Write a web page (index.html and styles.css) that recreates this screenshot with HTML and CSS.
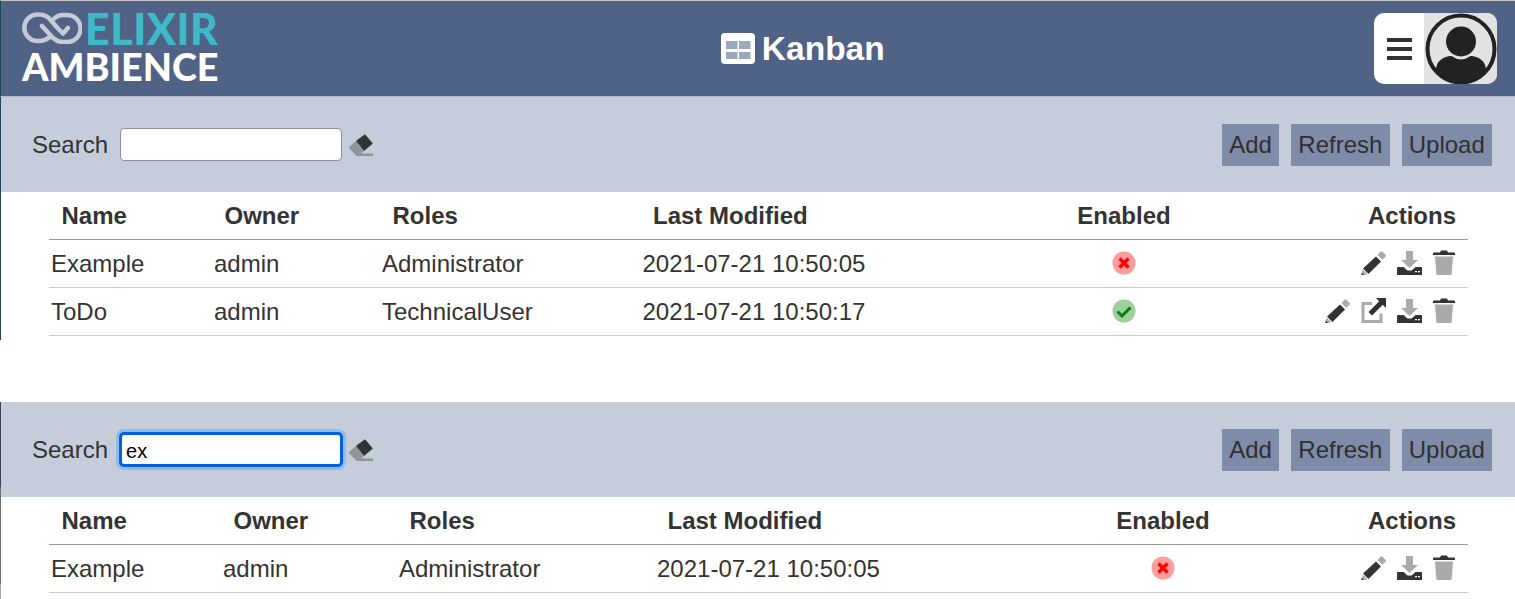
FILE: index.html
```html
<!DOCTYPE html>
<html lang="en">
<head>
    <meta charset="UTF-8">
    <title>Elixir Ambience - Kanban</title>
    <link rel="stylesheet" href="styles.css">
</head>
<body>
    <svg class="sprites" width="0" height="0">
        <symbol id="i-pencil" viewBox="0 0 25 25">
            <path fill="#333" d="M15 6.500l5 5L7.500 24 2 18.500z"/>
            <path fill="#aaa" d="M16.500 5l3-3.200a1.500 1.500 0 0 1 2 0l3 3a1.500 1.500 0 0 1 0 2l-3.200 3zM1.700 19.500l4.800 4.800-4 .7-2-.5z"/>
            <path fill="#333" d="M.5 22.500L3 25H.5z"/>
        </symbol>
        <symbol id="i-download" viewBox="0 0 25 25">
            <path fill="#aaa" d="M9 1h7v9h5l-8.500 8L4 10h5z"/>
            <path fill="#333" d="M0 18c0-.5.500-1 1-1h5.500l4 3.500h4l4-3.500H24c.5 0 1 .5 1 1v7H0zM18 21v1.300h2V21zm3 0v1.300h2V21z" fill-rule="evenodd"/>
        </symbol>
        <symbol id="i-trash" viewBox="0 0 22 25">
            <path fill="#aaa" d="M2 6.500h18l-1.300 17a1.500 1.500 0 0 1-1.500 1.500H4.800a1.500 1.500 0 0 1-1.500-1.500z"/>
            <path fill="#333" d="M7 2.500L8 .5h6l1 2h6a1 1 0 0 1 1 1V5H0V3.500a1 1 0 0 1 1-1z"/>
        </symbol>
        <symbol id="i-link" viewBox="0 0 25 25">
            <path fill="none" stroke="#aaa" stroke-width="3" d="M11 5.500H2v18h18v-8"/>
            <path fill="#333" d="M15 0h10v10l-3.200-3.200L11 17.500 7.500 14 18.200 3.300z"/>
        </symbol>
        <symbol id="i-eraser" viewBox="0 0 25 22">
            <path fill="#333" stroke="#333" stroke-linejoin="round" d="M17 .8L24.300 9.500 16 16.500 8.500 7z"/>
            <path fill="#8f939c" d="M8 7l8 10-3 2.500H25V22H8.500L.5 13.500z"/>
        </symbol>
        <symbol id="i-no" viewBox="0 0 24 24">
            <circle cx="12" cy="12" r="11.500" fill="#ff9c9c"/>
            <path fill="#f00" d="M8.700 6.300l3.300 3.300 3.300-3.300 2.400 2.400-3.300 3.300 3.300 3.300-2.400 2.400-3.300-3.300-3.300 3.300-2.400-2.400 3.300-3.300-3.300-3.300z"/>
        </symbol>
        <symbol id="i-yes" viewBox="0 0 24 24">
            <circle cx="12" cy="12" r="11.500" fill="#9dd09d"/>
            <path fill="none" stroke="#008000" stroke-width="3" d="M5.500 12.500l4.500 4.500 8.500-8.500"/>
        </symbol>
    </svg>

    <header class="topbar">
        <div class="logo">
            <div class="logo-top">
                <svg class="logo-mark" viewBox="0 0 60 32" width="60" height="32">
                    <g fill="none" stroke="#c5cad6" stroke-width="4.500" stroke-linecap="round" stroke-linejoin="round">
                        <path d="M46 16l-5 5.500-5.500-5.500L29 8.500C26 4.500 22 2.500 17 2.500H14.500a13.300 13.300 0 0 0 0 26.500H17c4 0 7-1 10-3.500"/>
                        <path d="M20 14l11 12c3 2.500 6 4 10 4h4a13.500 13.500 0 0 0 0-27h-4c-4 0-7 1.500-10 4.500"/>
                    </g>
                </svg>
                <span class="logo-elixir">ELIXIR</span>
            </div>
            <div class="logo-ambience">AMBIENCE</div>
        </div>
        <div class="page-title">
            <svg class="title-icon" viewBox="0 0 34 31" width="34" height="31">
                <rect width="34" height="31" rx="4" fill="#fff"/>
                <path fill="#9ba8bf" d="M5 8h11.500v8H5zM18 8h11.500v8H18zM5 19h11.500v7H5zM18 19h11.500v7H18z"/>
            </svg>
            <span>Kanban</span>
        </div>
        <div class="user-box">
            <div class="menu-btn"><i></i><i></i><i></i></div>
            <div class="avatar">
                <svg viewBox="0 0 72 72" width="72" height="72">
                    <circle cx="36" cy="36" r="33.500" fill="none" stroke="#222" stroke-width="4"/>
                    <circle cx="36" cy="28.500" r="15" fill="#222"/>
                    <path fill="#222" d="M11 58c0-8 4-12 10-14 4-1.500 6-1 8 .5 4 2.500 10 2.500 14 0 2-1.500 4-2 8-.5 6 2 10 6 10 14a33 33 0 0 1-50 0z"/>
                </svg>
            </div>
        </div>
    </header>

    <section class="panel panel-first">
        <div class="toolbar">
            <div class="search">
                <label for="q1">Search</label>
                <input id="q1" type="text">
                <svg class="eraser" width="25" height="22"><use href="#i-eraser"/></svg>
            </div>
            <div class="buttons">
                <button>Add</button>
                <button>Refresh</button>
                <button>Upload</button>
            </div>
        </div>
        <div class="table-wrap">
            <table class="grid grid-a">
                <thead>
                    <tr><th class="c-name">Name</th><th class="c-owner">Owner</th><th class="c-roles">Roles</th><th class="c-mod">Last Modified</th><th class="c-on">Enabled</th><th class="c-act">Actions</th></tr>
                </thead>
                <tbody>
                    <tr>
                        <td>Example</td><td>admin</td><td>Administrator</td><td>2021-07-21 10:50:05</td>
                        <td class="c-on"><svg class="state" width="24" height="24"><use href="#i-no"/></svg></td>
                        <td class="c-act"><div class="acts">
                            <svg width="25" height="25"><use href="#i-pencil"/></svg>
                            <svg width="25" height="25"><use href="#i-download"/></svg>
                            <svg width="22" height="25"><use href="#i-trash"/></svg>
                        </div></td>
                    </tr>
                    <tr>
                        <td>ToDo</td><td>admin</td><td>TechnicalUser</td><td>2021-07-21 10:50:17</td>
                        <td class="c-on"><svg class="state" width="24" height="24"><use href="#i-yes"/></svg></td>
                        <td class="c-act"><div class="acts">
                            <svg width="25" height="25"><use href="#i-pencil"/></svg>
                            <svg width="25" height="25"><use href="#i-link"/></svg>
                            <svg width="25" height="25"><use href="#i-download"/></svg>
                            <svg width="22" height="25"><use href="#i-trash"/></svg>
                        </div></td>
                    </tr>
                </tbody>
            </table>
        </div>
    </section>

    <section class="panel panel-second">
        <div class="toolbar">
            <div class="search">
                <label for="q2">Search</label>
                <input id="q2" class="focused" type="text" value="ex">
                <svg class="eraser" width="25" height="22"><use href="#i-eraser"/></svg>
            </div>
            <div class="buttons">
                <button>Add</button>
                <button>Refresh</button>
                <button>Upload</button>
            </div>
        </div>
        <div class="table-wrap">
            <table class="grid grid-b">
                <thead>
                    <tr><th class="c-name">Name</th><th class="c-owner">Owner</th><th class="c-roles">Roles</th><th class="c-mod">Last Modified</th><th class="c-on">Enabled</th><th class="c-act">Actions</th></tr>
                </thead>
                <tbody>
                    <tr>
                        <td>Example</td><td>admin</td><td>Administrator</td><td>2021-07-21 10:50:05</td>
                        <td class="c-on"><svg class="state" width="24" height="24"><use href="#i-no"/></svg></td>
                        <td class="c-act"><div class="acts">
                            <svg width="25" height="25"><use href="#i-pencil"/></svg>
                            <svg width="25" height="25"><use href="#i-download"/></svg>
                            <svg width="22" height="25"><use href="#i-trash"/></svg>
                        </div></td>
                    </tr>
                </tbody>
            </table>
        </div>
    </section>
</body>
</html>
```

FILE: styles.css
```css
* {
    box-sizing: border-box;
}

html, body {
    height: 599px;
    overflow: hidden;
}

body {
    margin: 0;
    background: #fff;
    color: #333;
    font-family: "Liberation Sans", Arial, sans-serif;
    font-size: 24px;
}

.sprites {
    position: absolute;
}

.topbar {
    height: 97px;
    display: flex;
    justify-content: space-between;
    align-items: center;
    padding: 0 18px 0 20px;
    background: #506285;
    border-top: 1px solid #c8c8c8;
    border-left: 1px solid #1c4a55;
    border-bottom: 1px solid #b4bac6;
}

.logo {
    color: #fff;
    font-family: Lato, "Liberation Sans", sans-serif;
    font-weight: 900;
    line-height: 1;
}

.logo-top {
    display: flex;
    align-items: center;
    height: 33px;
    margin-top: -3px;
}

.logo-mark {
    flex: none;
    margin: 0 3px 0 1px;
}

.logo-elixir {
    color: #3db9c9;
    font-size: 43px;
    line-height: 33px;
    letter-spacing: .5px;
    margin-top: 2px;
}

.logo-ambience {
    font-size: 37.800px;
    line-height: 33px;
    margin: 6px 0 0 1px;
}

.page-title {
    display: flex;
    align-items: center;
    gap: 7px;
    margin-left: 13px;
    color: #fff;
    font-size: 33.500px;
    font-weight: bold;
}

.user-box {
    display: flex;
    width: 123px;
    height: 71px;
    border-radius: 10px;
    overflow: hidden;
    background: #fff;
}

.menu-btn {
    width: 50px;
    display: flex;
    flex-direction: column;
    justify-content: center;
    align-items: center;
    gap: 5px;
}

.menu-btn i {
    width: 25px;
    height: 4px;
    background: #333;
}

.avatar {
    flex: 1;
    background: #e2e2e2;
    display: flex;
    align-items: center;
    justify-content: center;
}

.panel-first {
    height: 243px;
    border-left: 1px solid #1c4a55;
}

.panel-second {
    height: 197px;
    margin-top: 62px;
    border-left: 1px solid;
    border-image: linear-gradient(#3a4256 0, #3a4256 85px, #6e7074 85px, #6e7074 181px, #a6a6a6 181px) 1;
}

.toolbar {
    height: 95px;
    display: flex;
    justify-content: space-between;
    align-items: center;
    padding: 0 23px 0 31px;
    background: #c5cddb;
}

.search {
    display: flex;
    align-items: center;
}

.search input {
    width: 222px;
    height: 33px;
    margin: 0 6px 0 12px;
    padding: 1px 5px;
    border: 1px solid #8f8f9d;
    border-radius: 4px;
    background: #fff;
    color: #000;
    font: 20px "Liberation Sans", Arial, sans-serif;
    outline: none;
}

.search input.focused {
    padding: 5px 4px 1px;
    border: 2px solid #0060df;
    box-shadow: 0 0 0 1px #0060df, 0 0 0 4px #8fbce8;
}

.buttons {
    display: flex;
    gap: 12px;
}

.buttons button {
    height: 42px;
    padding: 0 7.200px;
    border: 0;
    background: #7f8ca9;
    color: #2f2f2f;
    font: 24px "Liberation Sans", Arial, sans-serif;
}

.table-wrap {
    padding: 0 47px 0 48px;
}

.grid {
    width: 100%;
    table-layout: fixed;
    border-collapse: collapse;
}

.grid th {
    height: 47px;
    padding: 2px 0 0 12.500px;
    text-align: left;
    border-bottom: 1px solid #999;
    white-space: nowrap;
}

.grid td {
    height: 48px;
    padding: 2px 0 0 2px;
    border-bottom: 1px solid #ccc;
    white-space: nowrap;
}

.grid .c-on {
    text-align: center;
    padding: 0;
}

.grid th.c-on {
    padding-top: 2px;
}

.grid .c-act {
    text-align: right;
    padding: 2px 12px 0 0;
}

.grid td.c-act {
    padding: 0 13px 1px 0;
}

.grid-a .c-name { width: 163px; }
.grid-a .c-owner { width: 168px; }
.grid-a .c-roles { width: 260.500px; }
.grid-a .c-mod { width: 373.500px; }
.grid-a .c-on { width: 220px; }

.grid-b .c-name { width: 172px; }
.grid-b .c-owner { width: 176px; }
.grid-b .c-roles { width: 258px; }
.grid-b .c-mod { width: 376px; }
.grid-b .c-on { width: 264px; }

.state {
    display: block;
    margin: 0 auto;
}

.acts {
    display: flex;
    justify-content: flex-end;
    align-items: center;
    gap: 11px;
}

.eraser {
    flex: none;
}
```
